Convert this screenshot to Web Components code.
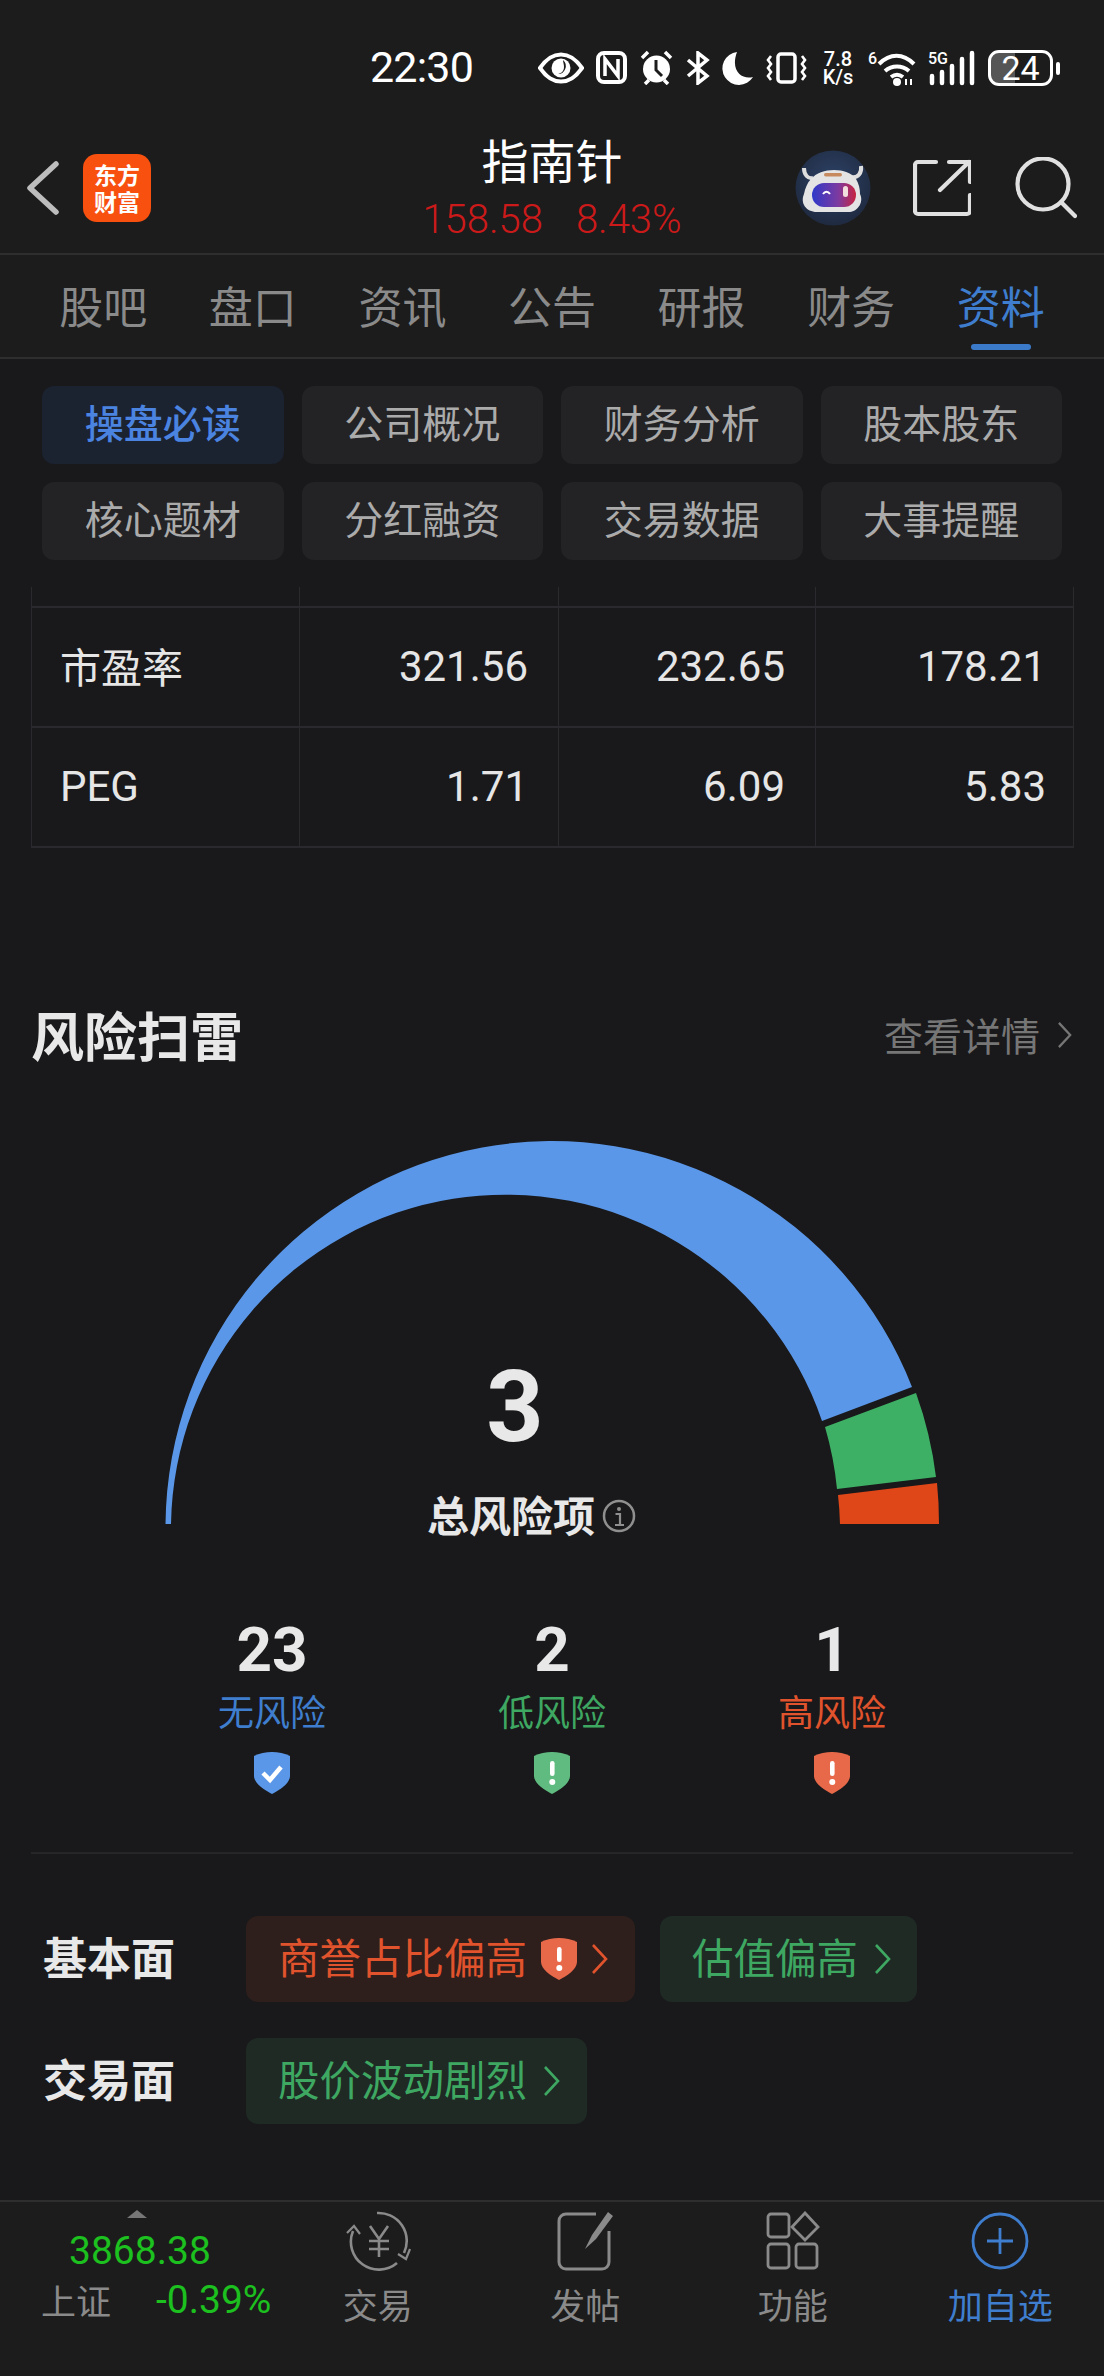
<!DOCTYPE html>
<html lang="zh"><head><meta charset="utf-8"><title>风险扫雷</title>
<style>
html,body{margin:0;padding:0;background:#19191b}
body{width:1104px;height:2376px;overflow:hidden;font-family:"Noto Sans CJK SC","Noto Sans",sans-serif;color:#e8e8e8}
</style></head><body>
<app-page>
  <status-bar></status-bar>
  <app-header></app-header>
  <tab-bar></tab-bar>
  <chip-grid></chip-grid>
  <data-table></data-table>
  <section-title></section-title>
  <risk-gauge></risk-gauge>
  <risk-stats></risk-stats>
  <risk-tags></risk-tags>
  <bottom-nav></bottom-nav>
</app-page>
<script>
const CJK='"Noto Sans CJK SC","Noto Sans",sans-serif';
const NUM='Roboto,"Liberation Sans",sans-serif';
function def(name,css,html){
  customElements.define(name,class extends HTMLElement{
    constructor(){super();const r=this.attachShadow({mode:'open'});r.innerHTML='<style>'+css+'</style>'+html;}
  });
}
const shieldPath='M18 0C24 0 31 1.500 36 4V24C36 31 26 38 18 42C10 38 0 31 0 24V4C5 1.500 12 0 18 0Z';
const shield=(c,inner)=>`<svg width="36" height="42" viewBox="0 0 36 42"><path fill="${c}" d="${shieldPath}"/>${inner}</svg>`;
const bang='<rect x="16" y="9" width="4.600" height="15" rx="2.300" fill="#fff"/><circle cx="18.300" cy="30" r="3" fill="#fff"/>';
const check='<path d="M9 21l7 7 11-13" fill="none" stroke="#fff" stroke-width="4.500"/>';
const chev=(c,w=18,h=30)=>`<svg width="${w}" height="${h}" viewBox="0 0 18 30"><path d="M2 1l13 14L2 29" fill="none" stroke="${c}" stroke-width="2.600"/></svg>`;

def('app-page',':host{display:flex;flex-direction:column;height:2376px}','<slot></slot>');

def('status-bar',`
:host{display:flex;align-items:center;height:95px;padding:40px 44px 0 370px;gap:12px;box-sizing:border-box;background:#1c1c1c;color:#fff;flex:none}
.t{font:400 43px/1 ${NUM};letter-spacing:-.8px;margin-right:auto;width:104px;white-space:nowrap}
svg{display:block;flex:none}
.sp{font:500 20px/18px ${NUM};text-align:center;width:36px;flex:none;white-space:nowrap}
.bat{position:relative;display:block;width:65px;height:36px;margin-right:7px;flex:none;box-sizing:border-box;border:3px solid #fff;border-radius:11px;background:linear-gradient(90deg,#555 0 40%,transparent 40%);font:400 34px/30px ${NUM};text-align:center}
.bat i{position:absolute;left:65px;top:9px;width:4px;height:13px;background:#fff;border-radius:2px}
`,`
<span class="t">22:30</span>
<svg width="46" height="32" viewBox="0 0 46 32"><path d="M2 16C9 6 15 2.500 23 2.500S37 6 44 16C37 26 31 29.500 23 29.500S9 26 2 16Z" fill="none" stroke="#fff" stroke-width="4"/><circle cx="23" cy="16" r="9.500" fill="#fff"/><path d="M25 8a8 8 0 0 1-6 14c3 0 7-2 7-7 0-3-1-5-1-7Z" fill="#1c1c1c"/></svg>
<svg width="31" height="33" viewBox="0 0 31 33"><rect x="2" y="2" width="27" height="29" rx="6" fill="none" stroke="#fff" stroke-width="4"/><path d="M9 25V8l13 17V8" fill="none" stroke="#fff" stroke-width="3.500"/></svg>
<svg width="35" height="35" viewBox="0 0 35 35"><circle cx="17.500" cy="19" r="13.500" fill="#fff"/><path d="M17 10v10l6 6" fill="none" stroke="#1c1c1c" stroke-width="3"/><path d="M3 8l6-6M32 8l-6-6M6 34l4-4M29 34l-4-4" stroke="#fff" stroke-width="3.500"/></svg>
<svg width="24" height="34" viewBox="0 0 24 34"><path d="M2 9l19 16-9 7V2l9 7L2 25" fill="none" stroke="#fff" stroke-width="3.500"/></svg>
<svg width="31" height="34" viewBox="0 0 31 34"><path d="M15 1A16.500 16.500 0 1 0 31 26C20 29 8 20 15 1Z" fill="#fff"/></svg>
<svg width="43" height="32" viewBox="0 0 43 32"><rect x="13" y="2" width="17" height="28" rx="3" fill="none" stroke="#fff" stroke-width="3.500"/><path d="M6 4l-3 4 3 4-3 4 3 4-3 4 3 4M37 4l3 4-3 4 3 4-3 4 3 4-3 4" fill="none" stroke="#fff" stroke-width="2.600"/></svg>
<span class="sp">7.8<br>K/s</span>
<svg width="48" height="36" viewBox="0 0 48 36"><text x="0" y="14" font-family="Roboto" font-weight="500" font-size="16" fill="#fff">6</text><path d="M11 14C22 3 35 3 46 14M17 21c7-6 17-6 24 0M23 27c4-3 8-3 12 0" fill="none" stroke="#fff" stroke-width="4"/><circle cx="29" cy="32" r="4" fill="#fff"/><path d="M38 29v6M43 29v6" stroke="#fff" stroke-width="2"/></svg>
<svg width="48" height="36" viewBox="0 0 48 36"><text x="0" y="14" font-family="Roboto" font-weight="500" font-size="16" fill="#fff">5G</text><path d="M4 26v7M14 22v11M24 16v17M34 9v24M44 3v30" stroke="#fff" stroke-width="4.500" stroke-linecap="round"/></svg>
<span class="bat">24<i></i></span>
`);

def('app-header',`
:host{display:grid;grid-template-columns:1fr auto 1fr;align-items:center;height:160px;background:#1c1c1c;border-bottom:2px solid #2e2e2e;box-sizing:border-box;flex:none;padding-top:28px}
.l{display:flex;align-items:center;gap:24px;padding-left:27px}
.logo{width:68px;height:68px;border-radius:14px;background:#f8500f;color:#fff;font:700 23px/27px ${CJK};display:flex;align-items:center;justify-content:center;text-align:center}
.c{text-align:center;white-space:nowrap}
.n{font:400 47px/60px ${CJK};color:#fff;margin-top:-6px}
.p{font:300 40px/42px ${NUM};color:#cc1a1a;display:flex;gap:33px;justify-content:center;margin-top:10px}
.r{display:flex;align-items:center;justify-content:flex-end;padding-right:29px}
svg{display:block}
.av{margin-right:42px;filter:blur(.6px)}
.sh{margin-right:44px}
.se{margin-right:-2px}
`,`
<div class="l"><svg width="32" height="54" viewBox="0 0 32 54"><path d="M29 3L3 27l26 24" fill="none" stroke="#bdbdbd" stroke-width="5.500" stroke-linecap="round" stroke-linejoin="round"/></svg><div class="logo"><div>东方<br>财富</div></div></div>
<div class="c"><div class="n">指南针</div><div class="p"><span>158.58</span><span>8.43%</span></div></div>
<div class="r">
<svg class="av" width="76" height="76" viewBox="0 0 76 76"><defs><radialGradient id="b" cx=".5" cy=".4" r=".6"><stop offset="0" stop-color="#2d4266"/><stop offset="1" stop-color="#1f2a40"/></radialGradient><linearGradient id="v" x1="0" x2="1"><stop offset="0" stop-color="#2f39c9"/><stop offset=".6" stop-color="#7d3aa0"/><stop offset="1" stop-color="#c7243f"/></linearGradient></defs><circle cx="38" cy="38" r="37.500" fill="url(#b)"/><path d="M9 18c0 7 4 11 9 10M66 16c1 7-3 12-9 11" fill="none" stroke="#dedede" stroke-width="4"/><path d="M16 29c5-6 14-9 23-9s18 3 22 9c3 5 4 10 4 15 4 8-2 17-10 18H22C11 62 5 53 9 44c1-5 3-11 7-15Z" fill="#e4e4e4"/><rect x="29" y="23" width="18" height="3.500" rx="1.700" fill="#c78a5e"/><rect x="17" y="33" width="44" height="24" rx="12" fill="url(#v)"/><path d="M28 44c2-3 5-3 7 0" fill="none" stroke="#fff" stroke-width="2"/><rect x="48" y="36" width="5" height="11" rx="2.500" fill="#f3dede"/></svg>
<svg class="sh" width="58" height="58" viewBox="0 0 58 58"><path d="M23 3H5a3 3 0 0 0-3 3v46a3 3 0 0 0 3 3h49a3 3 0 0 0 3-3V36M36 3h21v20M56 3L27 31" fill="none" stroke="#e0e0e0" stroke-width="4.200" stroke-linecap="round" stroke-linejoin="round"/></svg>
<svg class="se" width="62" height="62" viewBox="0 0 62 62"><circle cx="28" cy="27" r="25.500" fill="none" stroke="#e0e0e0" stroke-width="4.200"/><path d="M46 45l14 14" stroke="#e0e0e0" stroke-width="4.200" stroke-linecap="round"/></svg>
</div>`);

def('tab-bar',`
:host{display:grid;grid-template-columns:repeat(7,1fr);padding:0 28.500px;height:104px;box-sizing:border-box;background:#1c1c1c;border-bottom:2px solid #2e2e2e;flex:none}
span{position:relative;text-align:center;font:400 44px/100px ${CJK};color:#8a8a8a;white-space:nowrap;height:100px}
.a{color:#3f7ecf}
.a::after{content:"";position:absolute;left:50%;margin-left:-30px;top:89px;width:60px;height:6px;border-radius:3px;background:#3a7ac9}
`,`<span>股吧</span><span>盘口</span><span>资讯</span><span>公告</span><span>研报</span><span>财务</span><span class="a">资料</span>`);

def('chip-grid',`
:host{display:grid;grid-template-columns:repeat(4,241.500px);grid-auto-rows:78px;column-gap:18px;row-gap:18px;padding:27px 0 0 42px;box-sizing:border-box;height:228px;flex:none}
span{border-radius:12px;background:#232325;color:#ababab;font:400 39px/71px ${CJK};text-align:center;white-space:nowrap}
.a{background:#1b2230;color:#4a83e0;font-weight:500}
`,`<span class="a">操盘必读</span><span>公司概况</span><span>财务分析</span><span>股本股东</span><span>核心题材</span><span>分红融资</span><span>交易数据</span><span>大事提醒</span>`);

def('data-table',`
:host{display:grid;grid-template-columns:268px 259px 257px 258px;margin-left:31px;width:1043px;flex:none;box-sizing:border-box;border-left:1px solid #2a2a2e;border-right:1px solid #2a2a2e}
div{box-sizing:border-box;border-right:1px solid #2a2a2e;border-bottom:2px solid #2a2a2e;height:120px;font:400 42px/118px ${NUM};color:#e6e6e6;text-align:right;padding-right:30px;white-space:nowrap}
div.top{height:21px}
div.last{border-right:0;padding-right:28px}
div.k{text-align:left;padding-left:28px;padding-right:0;font-family:${CJK};font-size:41px;line-height:114px}
div.pe{font-family:${NUM};font-size:42px;line-height:118px}
`,`<div class="top"></div><div class="top"></div><div class="top"></div><div class="top last"></div>
<div class="k">市盈率</div><div>321.56</div><div>232.65</div><div class="last">178.21</div>
<div class="k pe">PEG</div><div>1.71</div><div>6.09</div><div class="last">5.83</div>`);

def('section-title',`
:host{display:flex;align-items:center;height:70px;margin-top:151px;padding:0 31px;flex:none}
b{font:700 53px/70px ${CJK};color:#e8e8e8;margin-right:auto;white-space:nowrap}
span{font:400 39px/70px ${CJK};color:#767676;margin-right:17px;white-space:nowrap}
svg{margin-top:2px}
`,`<b>风险扫雷</b><span>查看详情</span>${chev('#767676',16,26)}`);

def('risk-gauge',`
:host{display:grid;height:412px;margin-top:59px;flex:none}
svg.g,.o{grid-area:1/1}
svg{display:block}
.o{padding-right:74px;display:flex;flex-direction:column;align-items:center;padding-top:219px}
.n{font:700 100px/120px ${NUM};color:#e8e8e8}
.l{font:700 42px/50px ${CJK};color:#e8e8e8;margin-top:22px;display:flex;align-items:center;white-space:nowrap;margin-right:-33px;gap:7px}
.l svg{margin-top:4px}
`,`
<svg class="g" width="1104" height="412" viewBox="0 1128 1104 412">
<path fill="#5b97e8" d="M165.500 1524A386.500 386.500 0 0 1 912 1387L822 1421A334.500 334.500 0 0 0 171 1524Z"/>
<path fill="#3eb065" d="M916 1393A386.500 386.500 0 0 1 936 1477L837 1489A334.500 334.500 0 0 0 825 1427Z"/>
<path fill="#e04718" d="M937 1483A386.500 386.500 0 0 1 939 1524H840A334.500 334.500 0 0 0 838 1495Z"/>
</svg>
<div class="o"><div class="n">3</div><div class="l"><span>总风险项</span><svg width="34" height="34" viewBox="0 0 34 34"><circle cx="17" cy="17" r="15" fill="none" stroke="#8f8f8f" stroke-width="2.500"/><circle cx="17" cy="10" r="2" fill="#8f8f8f"/><path d="M13.500 15H18v11M13 26h9" fill="none" stroke="#8f8f8f" stroke-width="2.200"/></svg></div></div>
`);

def('risk-stats',`
:host{display:grid;grid-template-columns:repeat(3,280px);justify-content:center;box-sizing:border-box;height:235px;margin:79px 31px 0;border-bottom:2px solid #262628;flex:none}
div{display:flex;flex-direction:column;align-items:center}
b{font:700 62px/62px ${NUM};color:#e8e8e8}
span{font:400 36px/48px ${CJK};margin-top:5px;white-space:nowrap}
svg{margin-top:18px;display:block}
`,`
<div><b>23</b><span style="color:#3f7ecf">无风险</span>${shield('#5b97e8',check)}</div>
<div><b>2</b><span style="color:#3ea862">低风险</span>${shield('#5fbb7f',bang)}</div>
<div><b>1</b><span style="color:#e0532c">高风险</span>${shield('#e8694a',bang)}</div>`);

def('risk-tags',`
:host{display:flex;flex-direction:column;gap:36px;padding:62px 0 0 43px;flex:none;box-sizing:border-box}
.row{display:flex;align-items:center;gap:25px}
.row b{margin:0 -25px 7px 0}
b{font:700 44px/60px ${CJK};color:#e8e8e8;width:203px;white-space:nowrap}
.tag{display:flex;align-items:center;height:86px;border-radius:12px;padding:0 0 0 32px;font:400 41.500px/60px ${CJK};white-space:nowrap;box-sizing:border-box}
.tag u{text-decoration:none;margin-bottom:6px}
.red{background:#2e1f1c;color:#e0532c}
.grn{background:#1f2a25;color:#3ea862}
svg{display:block;flex:none}
.s{margin-left:14px}
.c{margin-left:14px}
.g{margin-left:16px}
.w1{width:389px}.w2{width:257px}.w3{width:341px}
`,`
<div class="row"><b>基本面</b><span class="tag red w1"><u>商誉占比偏高</u><svg class="s" width="36" height="42" viewBox="0 0 36 42"><path fill="#e8694a" d="${shieldPath}"/>${bang}</svg>${chev('#e0532c').replace('<svg','<svg class="c"')}</span><span class="tag grn w2"><u>估值偏高</u>${chev('#3ea862').replace('<svg','<svg class="g"')}</span></div>
<div class="row"><b>交易面</b><span class="tag grn w3"><u>股价波动剧烈</u>${chev('#3ea862').replace('<svg','<svg class="g"')}</span></div>`);

def('bottom-nav',`
:host{display:grid;grid-template-columns:274px repeat(4,1fr);height:176px;box-sizing:border-box;margin-top:auto;border-top:2px solid #2e2e2e;background:#1c1c1c;flex:none}
.idx{padding:0 0 0 41px;white-space:nowrap}
.tri{width:0;height:0;border:10.500px solid transparent;border-top:0;border-bottom:8px solid #777;margin:8px 0 0 86px}
.v{font:400 39px/44px ${NUM};color:#1cc01f;margin:11px 0 0 28px}
.b{display:flex;margin-top:3px;align-items:center}
.b span{font:400 35px/46px ${CJK};color:#8a8a8a;width:115px}
.b i{font:400 39px/48px ${NUM};font-style:normal;color:#1cc01f}
.it{display:flex;flex-direction:column;align-items:center;padding-top:9px}
.it svg{display:block;height:60px}
.it span{font:400 35px/50px ${CJK};color:#8a8a8a;margin-top:8px;white-space:nowrap}
.it.a span{color:#3f7ecf}
`,`
<div class="idx"><div class="tri"></div><div class="v">3868.38</div><div class="b"><span>上证</span><i>-0.39%</i></div></div>
<div class="it"><svg width="68" height="60" viewBox="0 0 68 60" fill="none" stroke="#8a8a8a" stroke-width="2.600"><path d="M33 2A28 28 0 0 1 60 42M53 52A28 28 0 0 1 9 20"/><path d="M3 22l7-7 6 8M66 38l-4 10-8-5" stroke-width="2.200"/><path d="M26 15l9 13 9-13M35 28v18M25 30h20M25 38h20"/></svg><span>交易</span></div>
<div class="it"><svg width="58" height="60" viewBox="0 0 58 60" fill="none" stroke="#8a8a8a" stroke-width="3"><path d="M40 3H10a7 7 0 0 0-7 7v41a7 7 0 0 0 7 7h36a7 7 0 0 0 7-7V20"/><path d="M52 1L36 24l-7 14 11-10 17-23Z" fill="#8a8a8a" stroke="none"/></svg><span>发帖</span></div>
<div class="it"><svg width="54" height="60" viewBox="0 0 54 60" fill="none" stroke="#8a8a8a" stroke-width="2.800"><rect x="2" y="3" width="21" height="23" rx="3"/><path d="M39 2l13 14-13 13-13-13Z"/><rect x="2" y="33" width="21" height="24" rx="3"/><rect x="30" y="33" width="21" height="24" rx="3"/></svg><span>功能</span></div>
<div class="it a"><svg width="58" height="60" viewBox="0 0 58 60" fill="none" stroke="#3f7ecf" stroke-width="2.800"><circle cx="29" cy="30" r="27"/><path d="M29 17v26M16 30h26"/></svg><span>加自选</span></div>
`);
</script>
</body></html>
